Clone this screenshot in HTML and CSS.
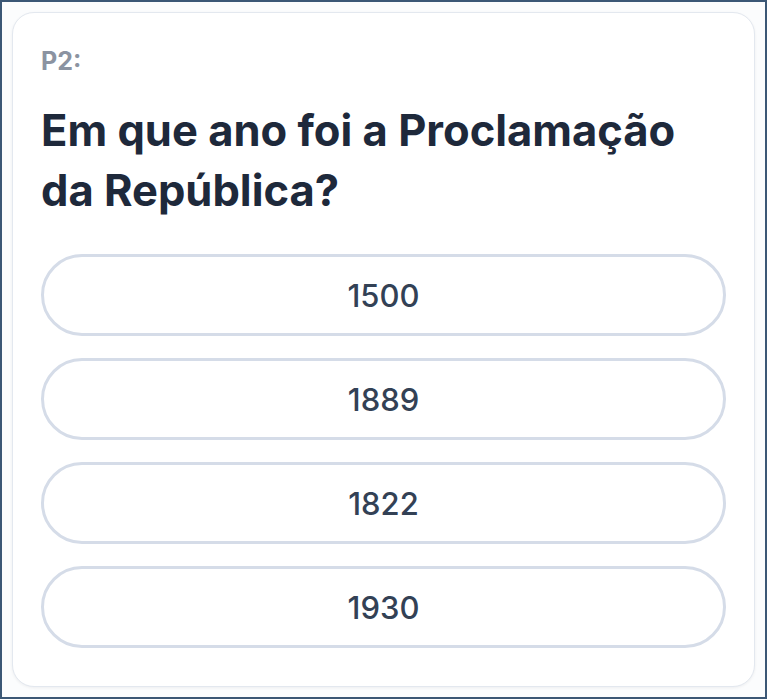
FILE: index.html
```html
<!DOCTYPE html>
<html>
<head>
  <title>Quiz</title>
  <link rel="stylesheet" href="styles.css">
</head>
<body>
  <div class="frame">
    <div class="card">
      <div class="label">P2:</div>
      <h2 class="question">Em que ano foi a Proclamação da República?</h2>
      <div class="options">
        <button class="option">1500</button>
        <button class="option">1889</button>
        <button class="option">1822</button>
        <button class="option">1930</button>
      </div>
    </div>
  </div>
</body>
</html>
```

FILE: styles.css
```css
html, body {
  margin: 0;
  padding: 0;
}
body {
  font-family: Inter, "Noto Sans", sans-serif;
  background: #ffffff;
}
.frame {
  box-sizing: border-box;
  width: 767px;
  height: 699px;
  border: 2px solid #3b5775;
  padding: 10px;
  background: #fbfcfd;
}
.card {
  box-sizing: border-box;
  height: 100%;
  background: #ffffff;
  border: 1px solid #e3e8ef;
  border-radius: 22px;
  padding: 32px 28px 28px;
  box-shadow: 0 1px 3px rgba(15, 23, 42, 0.06);
}
.label {
  font-size: 25px;
  font-weight: 700;
  color: #8b93a1;
  line-height: 32px;
}
.question {
  margin: 23px 0 34px;
  font-size: 43.5px;
  font-weight: 700;
  line-height: 60px;
  color: #1e293b;
}
.options {
  display: flex;
  flex-direction: column;
  gap: 22px;
}
.option {
  height: 82px;
  border: 3px solid #d5dce8;
  border-radius: 999px;
  background: #ffffff;
  font-family: inherit;
  font-size: 31px;
  font-weight: 500;
  color: #334155;
  cursor: pointer;
}
```
